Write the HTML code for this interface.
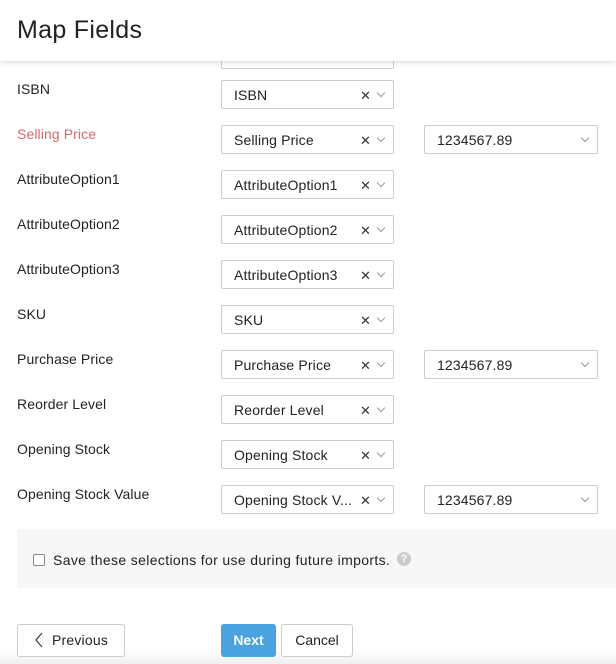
<!DOCTYPE html>
<html><head><style>
body{margin:0;width:616px;height:664px;overflow:hidden;background:#fff;font-family:"Liberation Sans",sans-serif;color:#222;position:relative}
.hdr{position:absolute;left:0;top:0;width:616px;height:61px;background:#fff;box-shadow:0 2px 4px rgba(0,0,0,.12);z-index:2}
.hdr h1{margin:0;position:absolute;left:17px;top:16px;font-size:25px;font-weight:normal;color:#222;letter-spacing:0.3px}
.lbl{position:absolute;left:17px;font-size:14px;color:#222;letter-spacing:0.1px}
.sel{position:absolute;height:29px;border:1px solid #c7ccd6;border-radius:2px;box-sizing:border-box;background:#fff;font-size:14px;line-height:29px;padding-left:12px;color:#222;letter-spacing:0.15px}
.s1{left:221px;width:173px}
.s2{left:424px;width:174px}
.x{position:absolute;right:22px;top:0;font-size:13px;color:#333}
.c{position:absolute;right:9px;top:12px;width:5px;height:5px;border-right:1px solid #999;border-bottom:1px solid #999;transform:rotate(45deg);margin-top:-3px}
.gray{position:absolute;left:17px;top:529px;width:599px;height:59px;background:#f7f7f7}
.btn{position:absolute;top:624px;height:33px;box-sizing:border-box;border:1px solid #ccc;border-radius:3px;background:#fff;font-size:14px;line-height:31px;text-align:center;color:#222}
</style></head><body>
<div class="hdr"><h1>Map Fields</h1></div>
<div class="sel s1" style="top:40px"></div>

<div class="lbl" style="top:81px">ISBN</div>
<div class="sel s1" style="top:80px">ISBN<span class="x">✕</span><span class="c"></span></div>

<div class="lbl" style="top:126px;color:#d66a67">Selling Price</div>
<div class="sel s1" style="top:125px">Selling Price<span class="x">✕</span><span class="c"></span></div>
<div class="sel s2" style="top:125px">1234567.89<span class="c"></span></div>

<div class="lbl" style="top:171px">AttributeOption1</div>
<div class="sel s1" style="top:170px">AttributeOption1<span class="x">✕</span><span class="c"></span></div>

<div class="lbl" style="top:216px">AttributeOption2</div>
<div class="sel s1" style="top:215px">AttributeOption2<span class="x">✕</span><span class="c"></span></div>

<div class="lbl" style="top:261px">AttributeOption3</div>
<div class="sel s1" style="top:260px">AttributeOption3<span class="x">✕</span><span class="c"></span></div>

<div class="lbl" style="top:306px">SKU</div>
<div class="sel s1" style="top:305px">SKU<span class="x">✕</span><span class="c"></span></div>

<div class="lbl" style="top:351px">Purchase Price</div>
<div class="sel s1" style="top:350px">Purchase Price<span class="x">✕</span><span class="c"></span></div>
<div class="sel s2" style="top:350px">1234567.89<span class="c"></span></div>

<div class="lbl" style="top:396px">Reorder Level</div>
<div class="sel s1" style="top:395px">Reorder Level<span class="x">✕</span><span class="c"></span></div>

<div class="lbl" style="top:441px">Opening Stock</div>
<div class="sel s1" style="top:440px">Opening Stock<span class="x">✕</span><span class="c"></span></div>

<div class="lbl" style="top:486px">Opening Stock Value</div>
<div class="sel s1" style="top:485px">Opening Stock V...<span class="x">✕</span><span class="c"></span></div>
<div class="sel s2" style="top:485px">1234567.89<span class="c"></span></div>

<div class="gray">
<div style="position:absolute;left:16px;top:25px;width:10px;height:10px;border:1px solid #888;border-radius:2px;background:#fff"></div>
<div style="position:absolute;left:36px;top:23px;font-size:14px;letter-spacing:0.35px">Save these selections for use during future imports.</div>
<div style="position:absolute;left:380px;top:23px;width:14px;height:14px;border-radius:50%;background:#ccc;color:#fff;font-size:11px;line-height:14px;text-align:center;font-weight:bold">?</div>
</div>

<div style="position:absolute;left:0;top:648px;width:616px;height:16px;background:linear-gradient(#fff,#f0f0f0)"></div>
<div class="btn" style="left:17px;width:108px;letter-spacing:0.2px"><svg width="10" height="16" viewBox="0 0 10 16" style="vertical-align:-3px;margin-right:8px"><path d="M8 1 L2 8 L8 15" fill="none" stroke="#444" stroke-width="1.3"/></svg>Previous</div>
<div class="btn" style="left:221px;width:55px;background:#4aa3df;border-color:#4aa3df;color:#fff;font-weight:bold">Next</div>
<div class="btn" style="left:281px;width:72px">Cancel</div>
</body></html>
